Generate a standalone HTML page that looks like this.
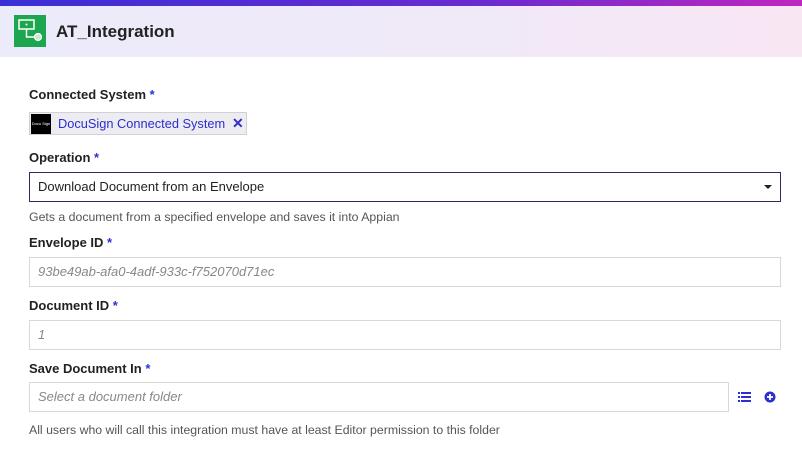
<!DOCTYPE html><html><head><style>
body{margin:0;width:802px;height:454px;background:#fff;font-family:"Liberation Sans",sans-serif;position:relative;overflow:hidden}
.a{position:absolute}
.bar{left:0;top:0;width:802px;height:6px;background:linear-gradient(90deg,#3a2fd6,#6a2bd0 60%,#c026c0)}
.hd{left:0;top:6px;width:802px;height:51px;background:linear-gradient(90deg,#ecebfb,#f0e9f8 60%,#f9e6f3)}
.lab{font-size:13px;font-weight:bold;color:#222;left:29px}
.lab i{color:#2f2fd9;font-style:normal}
.inp{left:29px;border:1px solid #d8d8d8;font-size:13px;font-style:italic;color:#888;line-height:28px;padding-left:8px;box-sizing:border-box;width:752px;height:30px}
.help{font-size:12.3px;color:#555;left:29px}
</style></head><body>
<div class="a bar"></div><div class="a hd"></div>
<div class="a" style="left:14px;top:15px;width:32px;height:32px;background:#1ca650">
<svg width="32" height="32"><rect x="5" y="5" width="15" height="9" fill="none" stroke="#fff" stroke-width="1.5"/><circle cx="12.5" cy="9.5" r="1" fill="#fff"/><path d="M12.5 14v8h9" stroke="#fff" stroke-width="1.5" fill="none"/><circle cx="24" cy="22" r="3.5" fill="#cfe9cf" stroke="#fff" stroke-width="1.2"/></svg></div>
<div class="a" style="left:56px;top:22px;font-size:17px;font-weight:bold;color:#222">AT_Integration</div>
<div class="a lab" style="top:87px">Connected System <i>*</i></div>
<div class="a" style="left:29px;top:112px;width:218px;height:23px;background:#ececf1;border:1px solid #d0d0d8;box-sizing:border-box">
<div class="a" style="left:1px;top:1px;width:20px;height:20px;background:#000;color:#fff;font-size:4px;line-height:20px;text-align:center">Docu Sign</div>
<div class="a" style="left:28px;top:3px;font-size:12.8px;color:#2d2dd0">DocuSign Connected System</div>
<div class="a" style="left:202px;top:2px;font-size:14px;font-weight:bold;color:#2d2dd0">✕</div></div>
<div class="a lab" style="top:150px">Operation <i>*</i></div>
<div class="a" style="left:29px;top:172px;width:752px;height:30px;border:1px solid #2a2a66;box-sizing:border-box;font-size:13px;color:#222;line-height:28px;padding-left:8px">Download Document from an Envelope<div class="a" style="right:8px;top:12px;border-left:4px solid transparent;border-right:4px solid transparent;border-top:4px solid #222"></div></div>
<div class="a help" style="top:210px">Gets a document from a specified envelope and saves it into Appian</div>
<div class="a lab" style="top:235px">Envelope ID <i>*</i></div>
<div class="a inp" style="top:257px">93be49ab-afa0-4adf-933c-f752070d71ec</div>
<div class="a lab" style="top:298px">Document ID <i>*</i></div>
<div class="a inp" style="top:320px">1</div>
<div class="a lab" style="top:361px">Save Document In <i>*</i></div>
<div class="a inp" style="top:382px;width:700px">Select a document folder</div>
<svg class="a" style="left:738px;top:391px" width="13" height="12"><g fill="#2d2dd0"><rect x="0" y="1" width="2" height="2"/><rect x="3" y="1" width="10" height="2"/><rect x="0" y="5" width="2" height="2"/><rect x="3" y="5" width="10" height="2"/><rect x="0" y="9" width="2" height="2"/><rect x="3" y="9" width="10" height="2"/></g></svg>
<svg class="a" style="left:764px;top:391px" width="12" height="12"><circle cx="6" cy="6" r="5.5" fill="#2d2dd0"/><path d="M3 6h6M6 3v6" stroke="#fff" stroke-width="1.8"/></svg>
<div class="a help" style="top:423px">All users who will call this integration must have at least Editor permission to this folder</div>
</body></html>
